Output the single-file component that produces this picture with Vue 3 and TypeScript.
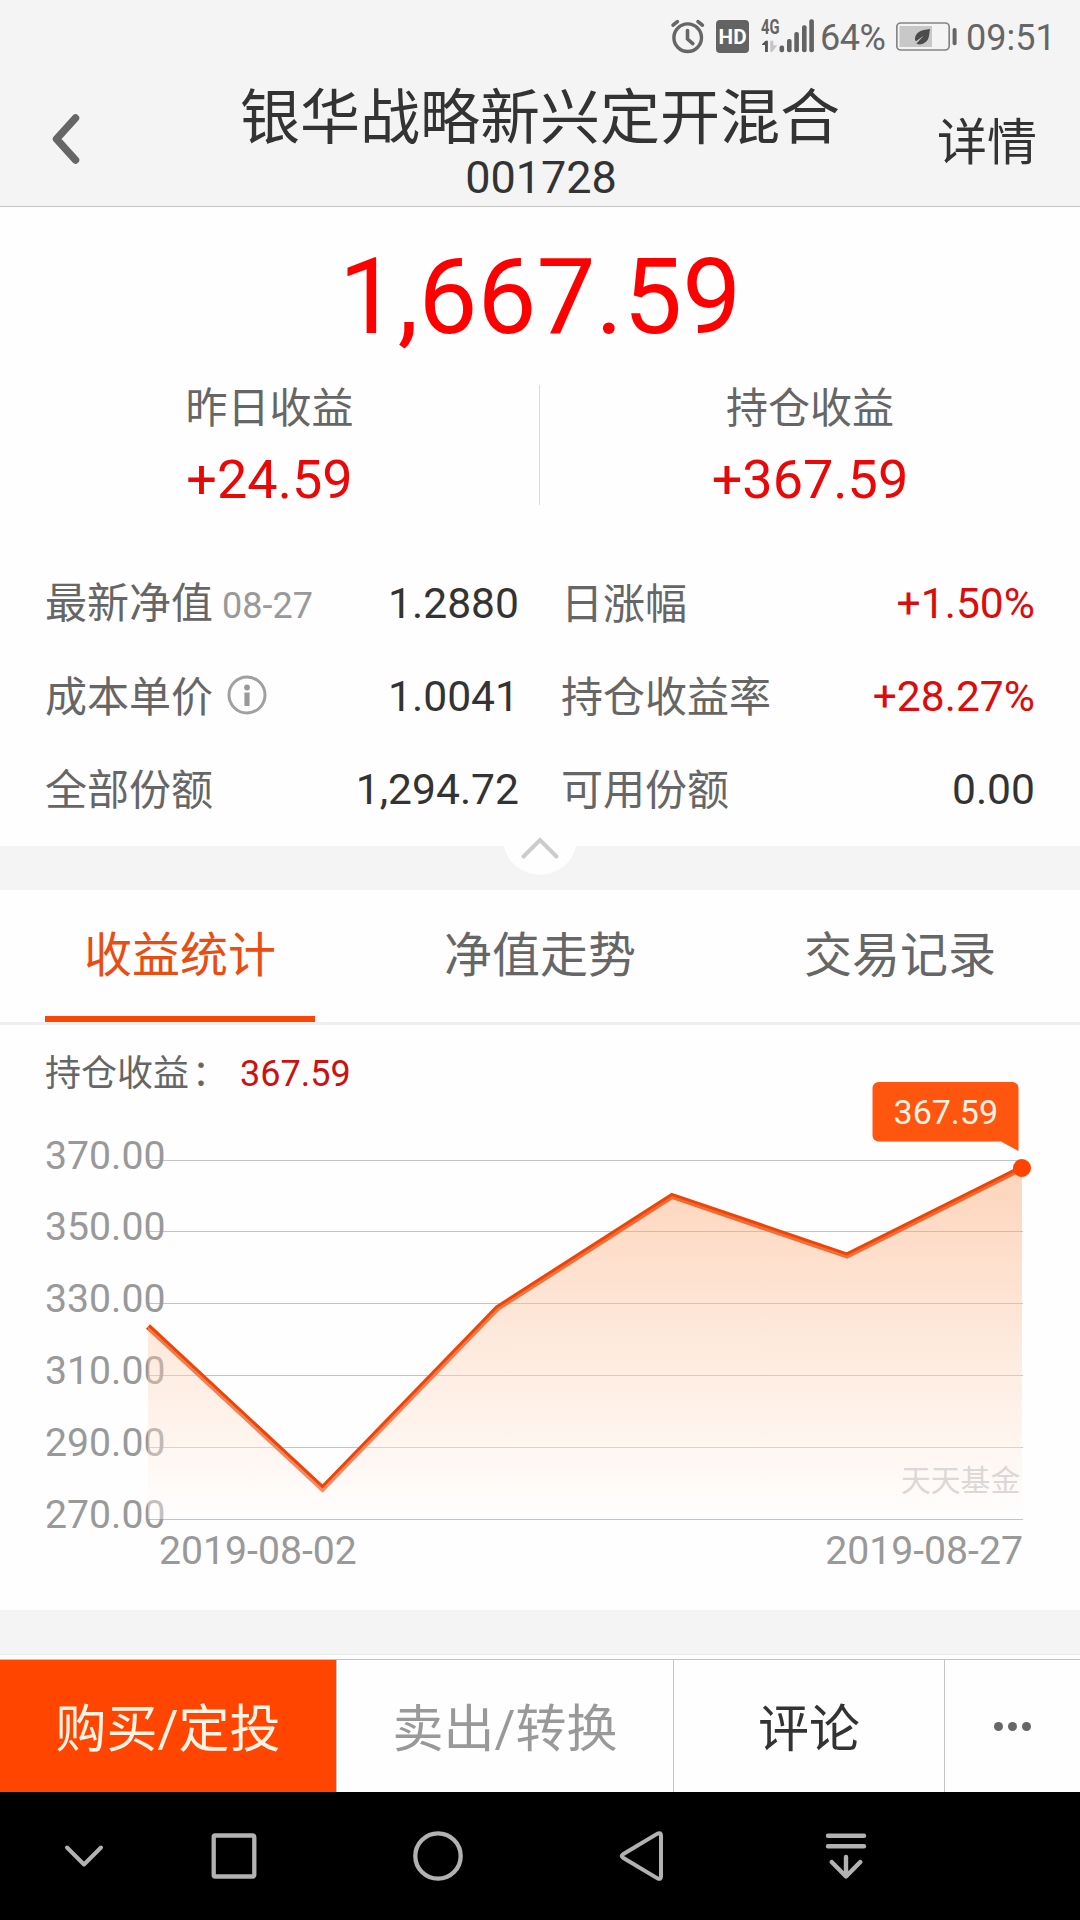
<script setup lang="ts">
interface Metric {
  label: string
  note?: string
  info?: boolean
  value: string
  rise?: boolean
}

const metrics: Metric[] = [
  { label: '最新净值', note: '08-27', value: '1.2880' },
  { label: '日涨幅', value: '+1.50%', rise: true },
  { label: '成本单价', info: true, value: '1.0041' },
  { label: '持仓收益率', value: '+28.27%', rise: true },
  { label: '全部份额', value: '1,294.72' },
  { label: '可用份额', value: '0.00' },
]

const tabs = ['收益统计', '净值走势', '交易记录']

const ticks = [
  { text: '370.00', y: 1160 },
  { text: '350.00', y: 1231 },
  { text: '330.00', y: 1303 },
  { text: '310.00', y: 1375 },
  { text: '290.00', y: 1447 },
  { text: '270.00', y: 1519 },
]

const points: [number, number][] = [
  [148, 1326.5],
  [322.5, 1488.5],
  [497.5, 1308],
  [672, 1196],
  [847, 1255.5],
  [1022, 1168],
]
const line = points.map((p) => p.join(',')).join(' ')
const area = `148,1519 ${line} 1022,1519`

const bars = [
  { x: 779.5, y: 45.5 },
  { x: 787, y: 39 },
  { x: 794.3, y: 32 },
  { x: 802, y: 25.3 },
  { x: 809.3, y: 19.3 },
]
</script>

<template>
  <div class="screen">
    <div class="status">
      <svg class="status-icons" width="151" height="72" viewBox="668 0 151 72">
        <g fill="none" stroke="#666" stroke-linecap="round">
          <circle cx="687.7" cy="37.7" r="13.8" stroke-width="3.4" />
          <path d="M687.5 30.5V39l5.3 4.6" stroke-width="3.6" />
          <path d="M673 25.2l4.4-3.6M702.4 25.2l-4.4-3.6" stroke-width="3.6" />
        </g>
        <rect x="716" y="20" width="33" height="33" rx="4" fill="#636363" />
        <text x="732.6" y="44" class="hd" text-anchor="middle" textLength="28" lengthAdjust="spacingAndGlyphs">HD</text>
        <text x="761" y="33.8" class="net" textLength="18.5" lengthAdjust="spacingAndGlyphs">4G</text>
        <path d="M762 44.2l3.6-3.4h2.3V52h-2.9v-7h-3z" fill="#555" />
        <path d="M770.3 40.8h3v4.4h4l-5.2 6.8h-1.8z" fill="#c4c4c4" />
        <rect v-for="b in bars" :key="b.x" :x="b.x" :y="b.y" width="4.6" :height="52.3 - b.y" rx="2" fill="#636363" />
      </svg>
      <span class="percent">64%</span>
      <svg class="battery" width="62" height="72" viewBox="896 0 62 72">
        <rect x="896.8" y="23" width="52.4" height="27" rx="4" fill="none" stroke="#858585" stroke-width="1.7" />
        <rect x="899.5" y="26" width="32.5" height="21" fill="#c8c8c8" />
        <rect x="952.6" y="28" width="4" height="17.3" rx="1.8" fill="#666" />
        <path d="M930 29c-9 .8-15.500 3.500-15 11l1 1.200 8-5.800-7.600 8.100c4 2.500 9.600-.4 11.600-4.200 1.600-3.100 1.200-6.800 2-10.300z" fill="#4c4c4c" />
      </svg>
      <span class="clock">09:51</span>
    </div>

    <header class="header">
      <svg class="back" width="40" height="60" viewBox="0 0 40 60">
        <path d="M27.500 9L8.500 30l19 21" fill="none" stroke="#666" stroke-width="7.500" stroke-linecap="round" stroke-linejoin="round" />
      </svg>
      <div class="heading">
        <div class="title">银华战略新兴定开混合</div>
        <div class="code">001728</div>
      </div>
      <div class="detail">详情</div>
    </header>

    <section class="summary">
      <div class="amount">1,667.59</div>
      <div class="gains">
        <div class="gain">
          <div class="gain-label">昨日收益</div>
          <div class="gain-value">+24.59</div>
        </div>
        <div class="divider"></div>
        <div class="gain">
          <div class="gain-label">持仓收益</div>
          <div class="gain-value">+367.59</div>
        </div>
      </div>
      <div class="metrics">
        <div v-for="m in metrics" :key="m.label" class="metric">
          <span class="metric-label">{{ m.label }}<span v-if="m.note" class="note">{{ m.note }}</span></span>
          <svg v-if="m.info" class="info" width="40" height="40" viewBox="0 0 40 40">
            <circle cx="20" cy="20" r="18" fill="none" stroke="#a0a0a0" stroke-width="3" />
            <circle cx="20" cy="12.500" r="2.900" fill="#999" />
            <rect x="17.400" y="17.500" width="5.200" height="13.500" fill="#999" />
          </svg>
          <span class="metric-value" :class="{ rise: m.rise }">{{ m.value }}</span>
        </div>
      </div>
    </section>

    <div class="band">
      <svg class="collapse" width="76" height="76" viewBox="502 800 76 76">
        <circle cx="540" cy="837.500" r="37.300" fill="#fefefe" />
        <path d="M523.500 856.500L540 840 556.500 856.500" fill="none" stroke="#ccc" stroke-width="4" stroke-linecap="round" />
      </svg>
    </div>

    <nav class="tabs">
      <div v-for="(t, i) in tabs" :key="t" class="tab" :class="{ active: i === 0 }">{{ t }}</div>
    </nav>

    <section class="chart">
      <div class="chart-head">
        <span class="chart-label">持仓收益<span class="colon">：</span></span>
        <span class="chart-value">367.59</span>
      </div>
      <svg class="plot" width="1080" height="488" viewBox="0 1122 1080 488">
        <defs>
          <linearGradient id="fade" x1="0" y1="1168" x2="0" y2="1519" gradientUnits="userSpaceOnUse">
            <stop offset="0" stop-color="#fb9657" stop-opacity="0.4" />
            <stop offset="1" stop-color="#fff" stop-opacity="0.4" />
          </linearGradient>
        </defs>
        <rect v-for="t in ticks" :key="t.y" x="148" :y="t.y" width="875" height="1" fill="#c4c4c4" />
        <g class="axis">
          <text v-for="t in ticks" :key="t.text" x="45" :y="t.y + 8.700">{{ t.text }}</text>
          <text x="159" y="1564">2019-08-02</text>
          <text x="1023" y="1564" text-anchor="end">2019-08-27</text>
        </g>
        <polyline :points="line" fill="none" stroke="#ee4408" stroke-width="6" />
        <polygon :points="area" fill="url(#fade)" />
        <text class="mark" x="901" y="1490.500">天天基金</text>
        <circle cx="1022" cy="1168" r="9" fill="#ff4400" />
        <path d="M878.500 1082h134a6 6 0 0 1 6 6v63l-17.500-9.500H878.500a6 6 0 0 1-6-6V1088a6 6 0 0 1 6-6z" fill="#ff560f" />
        <text class="tip" x="945.800" y="1124" text-anchor="middle">367.59</text>
      </svg>
    </section>

    <div class="band-bottom"></div>

    <div class="actions">
      <div class="action buy">购买/定投</div>
      <div class="action sell">卖出/转换</div>
      <div class="action comment">评论</div>
      <div class="action more"><i></i><i></i><i></i></div>
    </div>

    <svg class="softkeys" width="1080" height="128" viewBox="0 1792 1080 128">
      <g fill="none" stroke="#b2b2b2" stroke-width="4" stroke-linecap="round" stroke-linejoin="round">
        <path d="M67 1847.500l17 17 17-17" />
        <rect x="213.700" y="1835.500" width="40.600" height="41" rx="1.500" stroke-width="4.300" />
        <circle cx="438" cy="1856" r="22.700" stroke-width="4.300" />
        <path d="M657.500 1833.600L623 1854.300q-2.500 1.700 0 3.400L657.500 1878.400q3.500 1.500 3.500-2V1835.600q0-3.500-3.500-2z" />
        <path d="M828 1835.700h36M828 1846.300h36M846 1857v19M831.700 1862l14.300 14.500 14.300-14.500" stroke-width="4.400" />
      </g>
    </svg>
  </div>
</template>

<style>
body {
  margin: 0;
  background: #fff;
}
</style>

<style scoped>
.screen {
  width: 1080px;
  height: 1920px;
  overflow: hidden;
  display: flex;
  flex-direction: column;
  background: #fefefe;
  color: #333;
  font-family: Roboto, 'Noto Sans CJK SC', sans-serif;
  white-space: nowrap;
}
svg {
  display: block;
  flex: none;
}
.status {
  height: 74px;
  flex: none;
  display: flex;
  align-items: flex-start;
  padding-left: 668px;
  background: #f4f4f4;
  color: #666;
  font-size: 36px;
  line-height: 77px;
}
.hd {
  font-size: 21px;
  font-weight: 700;
  fill: #fff;
}
.net {
  font-size: 20px;
  font-weight: 700;
  fill: #636363;
}
.percent {
  width: 76px;
  padding-left: 1px;
  letter-spacing: -0.5px;
}
.clock {
  padding-left: 8px;
}
.header {
  height: 132px;
  flex: none;
  display: flex;
  background: #f4f4f4;
  border-bottom: 1px solid #c4c4c4;
}
.back {
  margin: 35px 0 0 48px;
}
.heading {
  flex: 1;
  padding: 13px 0 0 152px;
  width: 600px;
  text-align: center;
}
.title {
  font-size: 60px;
  line-height: 64px;
}
.code {
  padding-left: 2px;
  font-size: 45px;
  line-height: 54px;
}
.detail {
  width: 143px;
  margin-left: 97px;
  font-size: 50px;
  line-height: 138px;
}
.summary {
  height: 639px;
  flex: none;
}
.amount {
  padding-top: 31px;
  text-align: center;
  font-size: 105px;
  line-height: 120px;
  color: #ff0000;
}
.gains {
  display: flex;
  margin-top: 26px;
  height: 126px;
}
.gain {
  flex: 1;
  text-align: center;
}
.gain:first-child {
  flex: none;
  width: 539px;
}
.divider {
  width: 1px;
  height: 120px;
  margin-top: 1px;
  background: #d9d9d9;
}
.gain-label {
  font-size: 42px;
  line-height: 50px;
  color: #666;
}
.gain-value {
  margin-top: 16px;
  font-size: 54px;
  line-height: 60px;
  color: #ea0707;
}
.metrics {
  display: grid;
  grid-template-columns: 474px 474px;
  grid-auto-rows: 93px;
  column-gap: 42px;
  padding: 48px 0 0 45px;
}
.metric {
  display: flex;
  align-items: center;
}
.metric-label {
  font-size: 42px;
  line-height: 93px;
  color: #666;
}
.note {
  margin-left: 9px;
  font-size: 36px;
  color: #999;
}
.info {
  margin: -5px 0 0 14px;
}
.metric-value {
  margin-left: auto;
  padding-bottom: 3px;
  font-size: 42.6px;
  line-height: 90px;
}
.rise {
  color: #dc0c0c;
}
.band {
  position: relative;
  height: 44px;
  flex: none;
  background: #f4f4f4;
}
.collapse {
  position: absolute;
  left: 502px;
  top: -46px;
}
.tabs {
  display: flex;
  flex: none;
  height: 132px;
  border-bottom: 3px solid #eee;
}
.tab {
  position: relative;
  flex: 1;
  text-align: center;
  font-size: 48px;
  line-height: 132px;
  color: #666;
}
.active {
  color: #ea4d12;
}
.active::after {
  content: '';
  position: absolute;
  left: 45px;
  right: 45px;
  bottom: 0;
  height: 6px;
  background: #f94805;
}
.chart {
  height: 585px;
  flex: none;
}
.chart-head {
  display: flex;
  height: 97px;
  padding-left: 45px;
  font-size: 36px;
  line-height: 98px;
}
.chart-label {
  width: 195px;
  color: #666;
}
.colon {
  margin-left: 3px;
}
.chart-value {
  color: #cf1010;
}
.plot {
  overflow: visible;
}
.axis {
  font-size: 39.2px;
  fill: #999;
}
.mark {
  font-size: 29.8px;
  fill: #dcd8d6;
}
.tip {
  font-size: 34px;
  fill: #fff3e4;
}
.band-bottom {
  height: 44px;
  flex: none;
  background: #f4f4f4;
  border-bottom: 1px solid #e9e9e9;
}
.actions {
  display: flex;
  flex: none;
  height: 132px;
  margin-top: 4px;
  border-top: 1px solid #c4c4c4;
}
.action {
  box-sizing: border-box;
  border-right: 1px solid #c4c4c4;
  text-align: center;
  font-size: 51px;
  line-height: 139px;
}
.buy {
  width: 337px;
  background: #ff4500;
  color: #fff3e6;
}
.sell {
  width: 337px;
  color: #999;
}
.comment {
  width: 271px;
}
.more {
  flex: 1;
  display: flex;
  align-items: center;
  justify-content: center;
  gap: 5px;
  border-right: 0;
}
.more i {
  width: 9px;
  height: 9px;
  border-radius: 50%;
  background: #666;
}
.softkeys {
  background: #000;
}
</style>
